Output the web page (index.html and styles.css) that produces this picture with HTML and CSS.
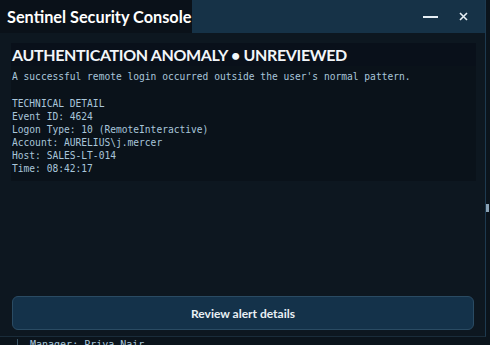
FILE: index.html
```html
<!DOCTYPE html>
<html lang="en">
  <head>
    <meta charset="UTF-8" />
    <title>Sentinel Security Console</title>
    <link rel="stylesheet" href="styles.css">
  </head>
  <body>
    <div class="desk">
      <div class="window">
        <div class="titlebar">
          <span class="title">Sentinel Security Console</span>
          <div class="controls">
            <span class="min"></span>
            <svg class="close" width="9" height="9" viewBox="0 0 9 9">
              <path d="M1 1 L8 8 M8 1 L1 8" stroke="#e6eef4" stroke-width="1.6" />
            </svg>
          </div>
        </div>

        <div class="content">
          <div class="alert">
            <h1>AUTHENTICATION ANOMALY • UNREVIEWED</h1>
            <p class="summary">A successful remote login occurred outside the user's normal pattern.</p>
            <pre class="detail">TECHNICAL DETAIL
Event ID: 4624
Logon Type: 10 (RemoteInteractive)
Account: AURELIUS\j.mercer
Host: SALES-LT-014
Time: 08:42:17</pre>
          </div>

          <button>Review alert details</button>
        </div>
      </div>
      <div class="scrollbar"><span class="thumb"></span></div>
    </div>
    <div class="behind">Manager: Priya Nair</div>
  </body>
</html>
```

FILE: styles.css
```css
body {
  margin: 0;
  background-color: #0b141c;
  font-family: Lato, 'Open Sans', sans-serif;
  width: 490px;
  height: 345px;
  overflow: hidden;
}
.desk {
  display: flex;
  height: 337px;
}
.window {
  width: 485px;
  display: flex;
  flex-direction: column;
  background-color: #0d1720;
  border-right: 1px solid #1d3a50;
  border-bottom: 1px solid #1a2c3a;
}
.titlebar {
  height: 33px;
  display: flex;
  align-items: center;
  justify-content: space-between;
  background-color: #163247;
}
.title {
  background-color: #0a1119;
  color: #ffffff;
  font-weight: 700;
  font-size: 16.3px;
  white-space: nowrap;
  height: 33px;
  line-height: 33px;
  padding: 0 0 0 7px;
  width: 185px;
}
.controls {
  display: flex;
  align-items: center;
  gap: 21px;
  padding-right: 17px;
}
.min {
  display: block;
  width: 15px;
  height: 2px;
  background-color: #e6eef4;
}
.content {
  flex: 1;
  display: flex;
  flex-direction: column;
  padding: 10px 11px 6px 11px;
}
.alert {
  width: 465px;
  background-color: #0a121a;
  padding: 0 0 6px 0;
}
h1 {
  margin: 0;
  padding: 2px 0 0 1px;
  height: 21px;
  color: #f2f6f9;
  font-size: 16px;
  font-weight: 700;
  letter-spacing: -0.35px;
  background-color: #09101a;
}
.summary,
.detail {
  font-family: 'DejaVu Sans Mono', monospace;
  font-size: 9.6px;
  color: #a9c6da;
  margin: 0;
  padding-left: 1px;
}
.summary {
  padding-top: 5px;
}
.detail {
  margin-top: 15px;
  line-height: 13px;
}
button {
  margin-top: auto;
  margin-left: 1px;
  width: 462px;
  height: 34px;
  background-color: #14324a;
  color: #e9f0f5;
  border: 1px solid #2a4b63;
  border-radius: 6px;
  font-family: Lato, sans-serif;
  font-size: 12px;
  font-weight: 700;
}
.scrollbar {
  width: 4px;
  background-color: #0b141c;
  position: relative;
}
.thumb {
  position: absolute;
  top: 204px;
  left: 0;
  width: 3px;
  height: 8px;
  background-color: #8aa2b5;
}
.behind {
  margin: 2px 0 0 17px;
  font-family: 'DejaVu Sans Mono', monospace;
  font-size: 10px;
  color: #a9c6da;
  border-left: 1px solid #3a5568;
  padding-left: 12px;
  line-height: 12px;
}
```
